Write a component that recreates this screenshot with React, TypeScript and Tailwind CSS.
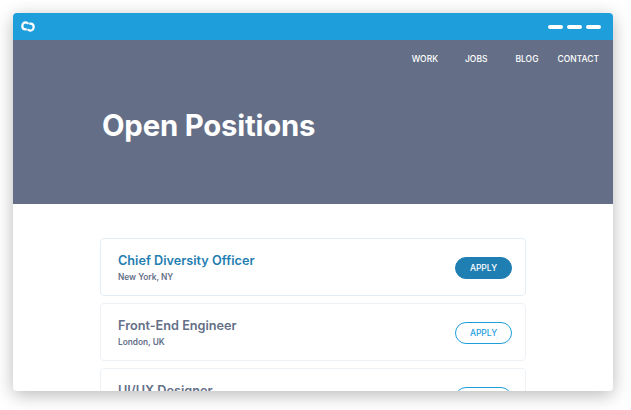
const jobs = [
  { title: "Chief Diversity Officer", place: "New York, NY", active: true },
  { title: "Front-End Engineer", place: "London, UK", active: false },
  { title: "UI/UX Designer", place: "Berlin, DE", active: false },
];

function Logo() {
  return (
    <svg width="14" height="11" viewBox="0 0 14 11" fill="none" stroke="#fff" strokeWidth="2.2" strokeLinecap="butt">
      <path d="M7.3 2.9 C6.6 1.9 5.6 1.4 4.6 1.4 C2.7 1.4 1.3 3 1.3 5 C1.3 7 2.7 8.4 4.6 8.4 L5.8 8.4" />
      <path d="M6.7 8.1 C7.4 9.1 8.4 9.6 9.4 9.6 C11.3 9.6 12.7 8 12.7 6 C12.7 4 11.3 2.6 9.4 2.6 L8.2 2.6" />
    </svg>
  );
}

export default function App() {
  return (
    <div className="w-[631px] h-[410px] bg-white pl-[13px] pt-[13px] overflow-hidden" style={{ fontFamily: "Inter, sans-serif" }}>
      <div className="w-[600px] h-[378px] rounded-[4px] overflow-hidden bg-white shadow-[0_4px_18px_rgba(0,0,0,0.28)]">
        {/* Top bar */}
        <div className="h-[27px] bg-[#1e9edb] flex items-center justify-between pl-[8px] pr-[12px]">
          <Logo />
          <div className="flex gap-[4px]">
            <span className="w-[15px] h-[4px] rounded-full bg-white" />
            <span className="w-[15px] h-[4px] rounded-full bg-white" />
            <span className="w-[15px] h-[4px] rounded-full bg-white" />
          </div>
        </div>

        {/* Hero */}
        <div className="h-[164px] bg-[#646f87] flex flex-col">
          <nav className="flex justify-end pt-[12px] pr-[14px] text-[8.5px] leading-[14px] font-medium text-white">
            <span>WORK</span>
            <span className="ml-[27px]">JOBS</span>
            <span className="ml-[28px]">BLOG</span>
            <span className="ml-[19px]">CONTACT</span>
          </nav>
          <h1 className="ml-[89px] mt-[40px] text-[29.3px] leading-[40px] font-bold tracking-[-0.2px] text-white">Open Positions</h1>
        </div>

        {/* Job list */}
        <div className="pt-[34px] pl-[87px] flex flex-col gap-[7px]">
          {jobs.map((job) => (
            <div
              key={job.title}
              className={`w-[426px] h-[58px] shrink-0 rounded-[4px] border flex items-center justify-between pl-[17px] pr-[13px] ${job.active ? "border-[#e3edf5]" : "border-[#edf2f7]"}`}
            >
              <div>
                <p className={`text-[12.7px] leading-[17px] font-semibold ${job.active ? "text-[#1f7eb2]" : "text-[#646f87]"}`}>{job.title}</p>
                <p className="mt-[2px] text-[8.3px] leading-[12px] font-semibold text-[#646f87]">{job.place}</p>
              </div>
              <button
                className={`mt-[2px] w-[57px] h-[22px] rounded-full border text-[8.5px] font-medium ${job.active ? "bg-[#1f7eb2] border-[#1f7eb2] text-white" : "bg-white border-[#1e9edb] text-[#1e9edb]"}`}
              >
                APPLY
              </button>
            </div>
          ))}
        </div>
      </div>
    </div>
  );
}
